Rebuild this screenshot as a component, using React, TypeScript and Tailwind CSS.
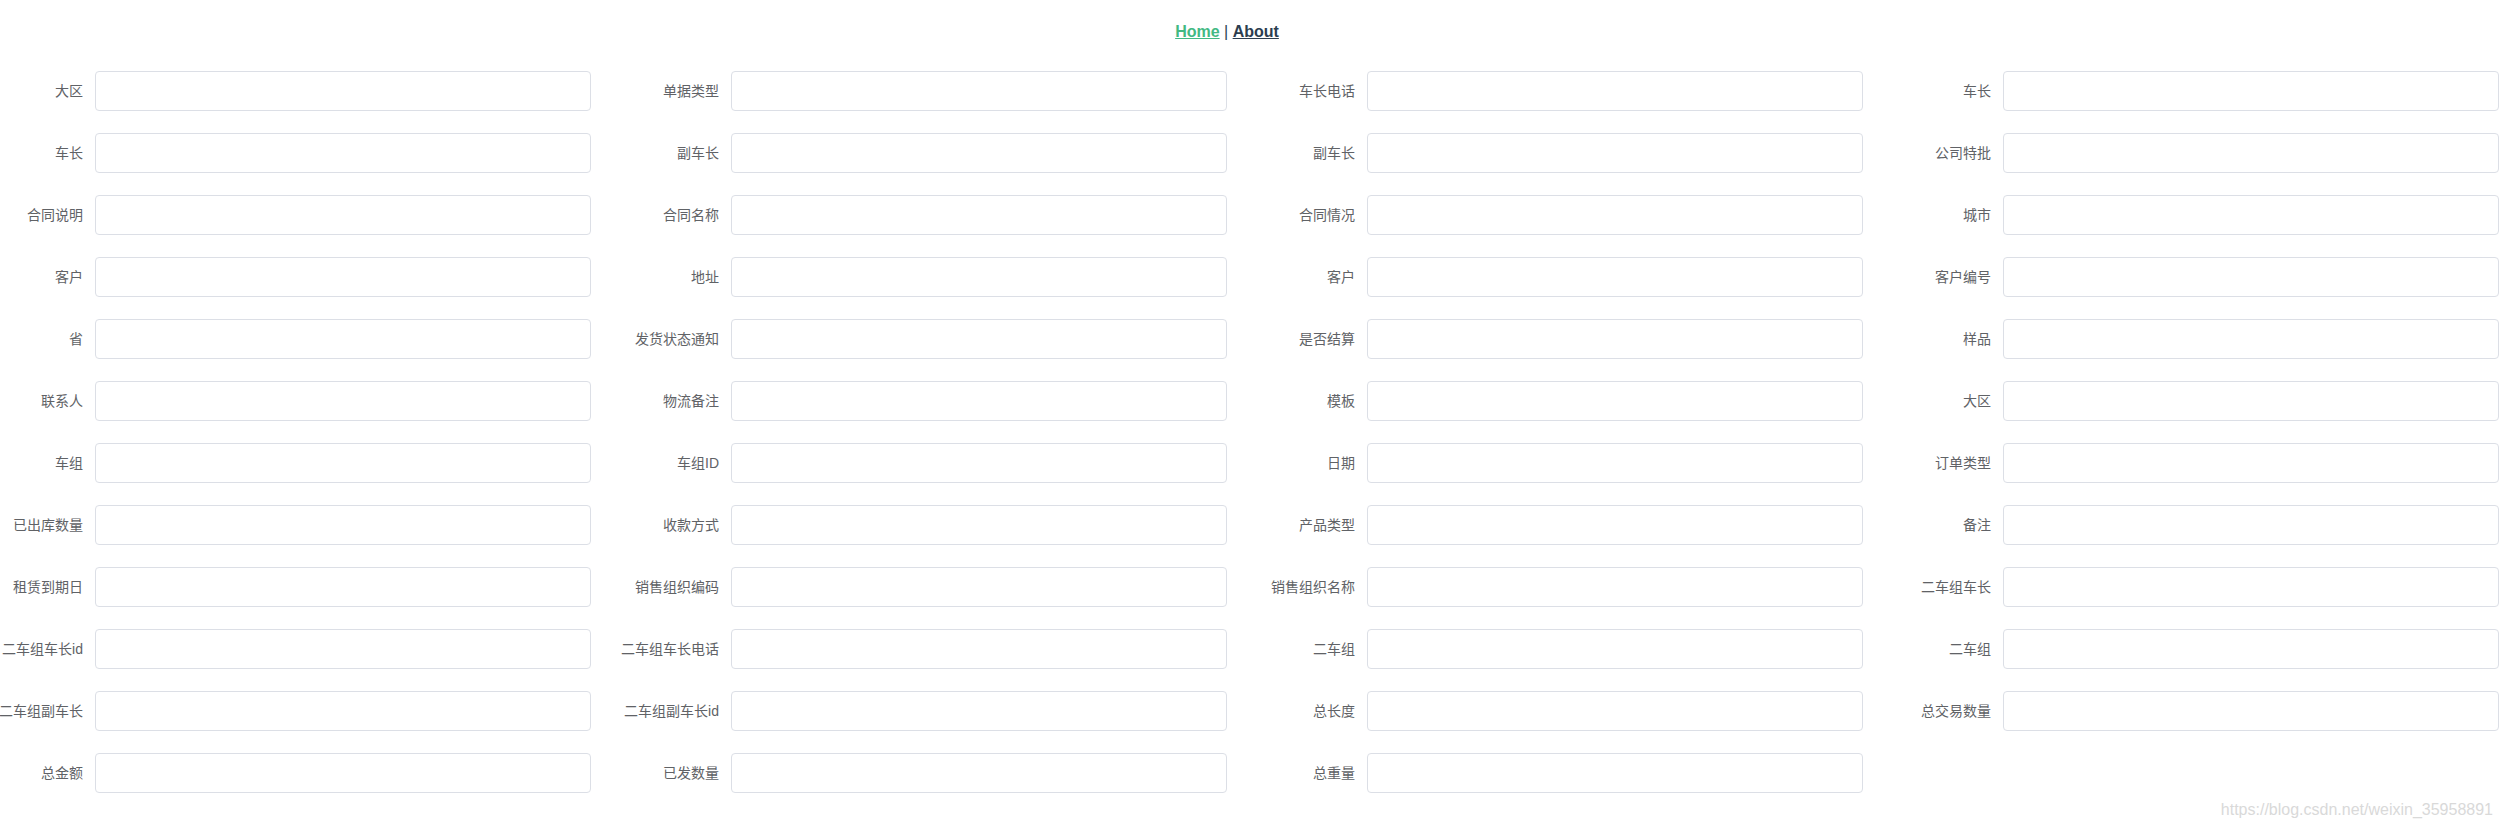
import React from "react";

const rows: string[][] = [
  ["大区", "单据类型", "车长电话", "车长"],
  ["车长", "副车长", "副车长", "公司特批"],
  ["合同说明", "合同名称", "合同情况", "城市"],
  ["客户", "地址", "客户", "客户编号"],
  ["省", "发货状态通知", "是否结算", "样品"],
  ["联系人", "物流备注", "模板", "大区"],
  ["车组", "车组ID", "日期", "订单类型"],
  ["已出库数量", "收款方式", "产品类型", "备注"],
  ["租赁到期日", "销售组织编码", "销售组织名称", "二车组车长"],
  ["二车组车长id", "二车组车长电话", "二车组", "二车组"],
  ["二车组副车长", "二车组副车长id", "总长度", "总交易数量"],
  ["总金额", "已发数量", "总重量"],
];

function Field({ label }: { label: string }) {
  return (
    <div className="flex h-10">
      <label className="w-[95px] shrink-0 flex items-center justify-end pr-3 whitespace-nowrap text-[14px] leading-10 text-[#606266]">
        {label}
      </label>
      <input
        type="text"
        className="w-[496px] h-10 shrink-0 border border-[#dcdfe6] rounded-[4px] bg-white px-[15px] text-[14px] text-[#606266] outline-none"
      />
    </div>
  );
}

export default function App() {
  const labels = rows.flat();
  return (
    <div
      className="relative w-full h-[827px] bg-white overflow-hidden"
      style={{ fontFamily: '"Liberation Sans", Helvetica, Arial, "Noto Sans CJK SC", sans-serif' }}
    >
      <div className="w-[2454px] h-[71px] pt-[23px] text-center text-[16px] leading-[18px] text-[#2c3e50]">
        <a href="#" className="font-bold underline text-[#42b983]">
          Home
        </a>
        <span className="font-normal"> | </span>
        <a href="#" className="font-bold underline text-[#2c3e50]">
          About
        </a>
      </div>
      <form className="grid grid-cols-[repeat(4,591px)] gap-x-[45px] gap-y-[22px]">
        {labels.map((l, i) => (
          <Field key={i} label={l} />
        ))}
      </form>
      <div className="absolute top-[801px] right-[9px] text-[16px] leading-[18px] text-[#d9d9d9] whitespace-nowrap">
        https://blog.csdn.net/weixin_35958891
      </div>
    </div>
  );
}
